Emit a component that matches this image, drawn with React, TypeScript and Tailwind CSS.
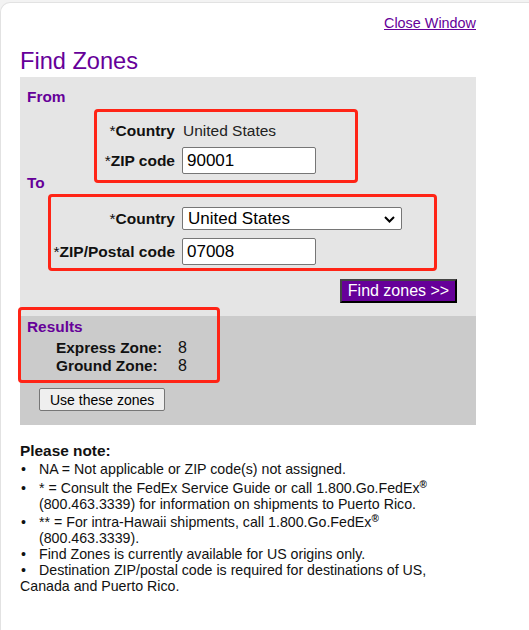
import React, { useState } from 'react';

const purple = 'text-[#660099]';

function Annotation({ className }: { className: string }) {
  // red boxes drawn over the screenshot
  return <div className={`pointer-events-none absolute rounded-[4px] border-[3px] border-[#ff2416] ${className}`} />;
}

function Chevron() {
  return (
    <svg width="11" height="7" viewBox="0 0 11 7" className="absolute right-[7px] top-[9px]">
      <path d="M1 1l4.5 4.5L10 1" fill="none" stroke="#000" strokeWidth="2" />
    </svg>
  );
}

function App() {
  const [fromZip, setFromZip] = useState('90001');
  const [toZip, setToZip] = useState('07008');
  const [country, setCountry] = useState('US');

  return (
    <div className="min-h-screen bg-[#f3f3f3] pt-[2px] font-['Liberation_Sans',Arial,sans-serif]">
      <div className="min-h-[628px] rounded-tl-[10px] border-l border-t border-[#e2e2e2] bg-white">
        <div className="ml-[19px] w-[456px]">
          <div className="pt-[11px] text-right text-[14.4px] leading-[18px]">
            <a href="#" className={`${purple} underline`}>Close Window</a>
          </div>
          <h1 className={`mt-[15px] text-[23.6px] leading-[28px] ${purple}`}>Find Zones</h1>

          <div className="relative mt-[2px]">
            <div className="bg-[#e5e5e5] pb-[13px] pt-[11px]">
              <div className={`pl-[7px] text-[15.4px] font-bold leading-[17px] ${purple}`}>From</div>

              <div className="mt-[17px] flex items-center text-[15.5px] leading-[18px]">
                <div className="w-[155px] text-right text-[#111]">*<b>Country</b></div>
                <div className="ml-[8px] text-[#222]">United States</div>
              </div>
              <div className="mt-[7px] flex items-center text-[15.5px]">
                <div className="w-[155px] text-right text-[#111]">*<b>ZIP code</b></div>
                <input
                  value={fromZip}
                  onChange={(e) => setFromZip(e.target.value)}
                  className="ml-[7px] h-[27px] w-[134px] rounded-[2px] border border-[#767676] bg-white pl-[4px] text-[17px] text-black outline-none"
                />
              </div>

              <div className={`pl-[7px] text-[15.4px] font-bold leading-[18px] ${purple}`}>To</div>

              <div className="mt-[15px] flex items-center text-[15.5px]">
                <div className="w-[155px] text-right text-[#111]">*<b>Country</b></div>
                <div className="relative ml-[7px]">
                  <select
                    value={country}
                    onChange={(e) => setCountry(e.target.value)}
                    className="h-[23px] w-[220px] appearance-none rounded-[2px] border border-[#767676] bg-white pl-[5px] text-[17px] leading-[21px] text-black outline-none"
                  >
                    <option value="US">United States</option>
                    <option value="CA">Canada</option>
                    <option value="PR">Puerto Rico</option>
                  </select>
                  <Chevron />
                </div>
              </div>
              <div className="mt-[8px] flex items-center text-[15.5px]">
                <div className="w-[155px] text-right text-[#111]">*<b>ZIP/Postal code</b></div>
                <input
                  value={toZip}
                  onChange={(e) => setToZip(e.target.value)}
                  className="ml-[7px] h-[27px] w-[134px] rounded-[2px] border border-[#767676] bg-white pl-[4px] text-[17px] text-black outline-none"
                />
              </div>

              <div className="mt-[14px] flex justify-end pr-[19px]">
                <button className="h-[24px] w-[117px] border-2 border-b-black border-l-[#444] border-r-black border-t-[#444] bg-[#660099] text-[16px] leading-[20px] text-white">
                  Find zones &gt;&gt;
                </button>
              </div>
            </div>

            <div className="bg-[#cbcbcb] pb-[13px] pt-[2px]">
              <div className={`pl-[7px] text-[15.4px] font-bold leading-[18px] ${purple}`}>Results</div>
              <div className="mt-[3px] text-[15.4px] leading-[18px] text-[#111]">
                <div className="flex">
                  <b className="ml-[36px] w-[122px]">Express Zone:</b>
                  <span className="text-[16px]">8</span>
                </div>
                <div className="flex">
                  <b className="ml-[36px] w-[122px]">Ground Zone:</b>
                  <span className="text-[16px]">8</span>
                </div>
              </div>
              <button className="ml-[19px] mt-[13px] h-[23px] rounded-[2px] border border-[#767676] bg-[#efefef] px-[10px] text-[14px] leading-[20px] text-black">
                Use these zones
              </button>
            </div>

            <Annotation className="left-[74px] top-[32px] h-[74px] w-[264px]" />
            <Annotation className="left-[28px] top-[117px] h-[77px] w-[389px]" />
            <Annotation className="-left-[2px] top-[230px] h-[76px] w-[202px]" />
          </div>

          <div className="mt-[17px] text-[14.2px] leading-[16px] text-[#111]">
            <div className="text-[15.4px] font-bold leading-[18px]">Please note:</div>
            <div className="mt-[1px] flex">
              <span className="w-[19px] pl-[1px]">•</span>
              <span>NA = Not applicable or ZIP code(s) not assigned.</span>
            </div>
            <div className="mt-[3px] flex">
              <span className="w-[19px] pl-[1px]">•</span>
              <span>
                * = Consult the FedEx Service Guide or call 1.800.Go.FedEx
                <sup className="text-[10px] font-bold leading-none">®</sup>
                <br />
                (800.463.3339) for information on shipments to Puerto Rico.
              </span>
            </div>
            <div className="mt-[2px] flex">
              <span className="w-[19px] pl-[1px]">•</span>
              <span>
                ** = For intra-Hawaii shipments, call 1.800.Go.FedEx
                <sup className="text-[10px] font-bold leading-none">®</sup>
                <br />
                (800.463.3339).
              </span>
            </div>
            <div className="flex">
              <span className="w-[19px] pl-[1px]">•</span>
              <span>Find Zones is currently available for US origins only.</span>
            </div>
            <div>
              <span className="inline-block w-[19px] pl-[1px]">•</span>
              Destination ZIP/postal code is required for destinations of US,
              <br />
              Canada and Puerto Rico.
            </div>
          </div>
        </div>
      </div>
    </div>
  );
}

export default App;
